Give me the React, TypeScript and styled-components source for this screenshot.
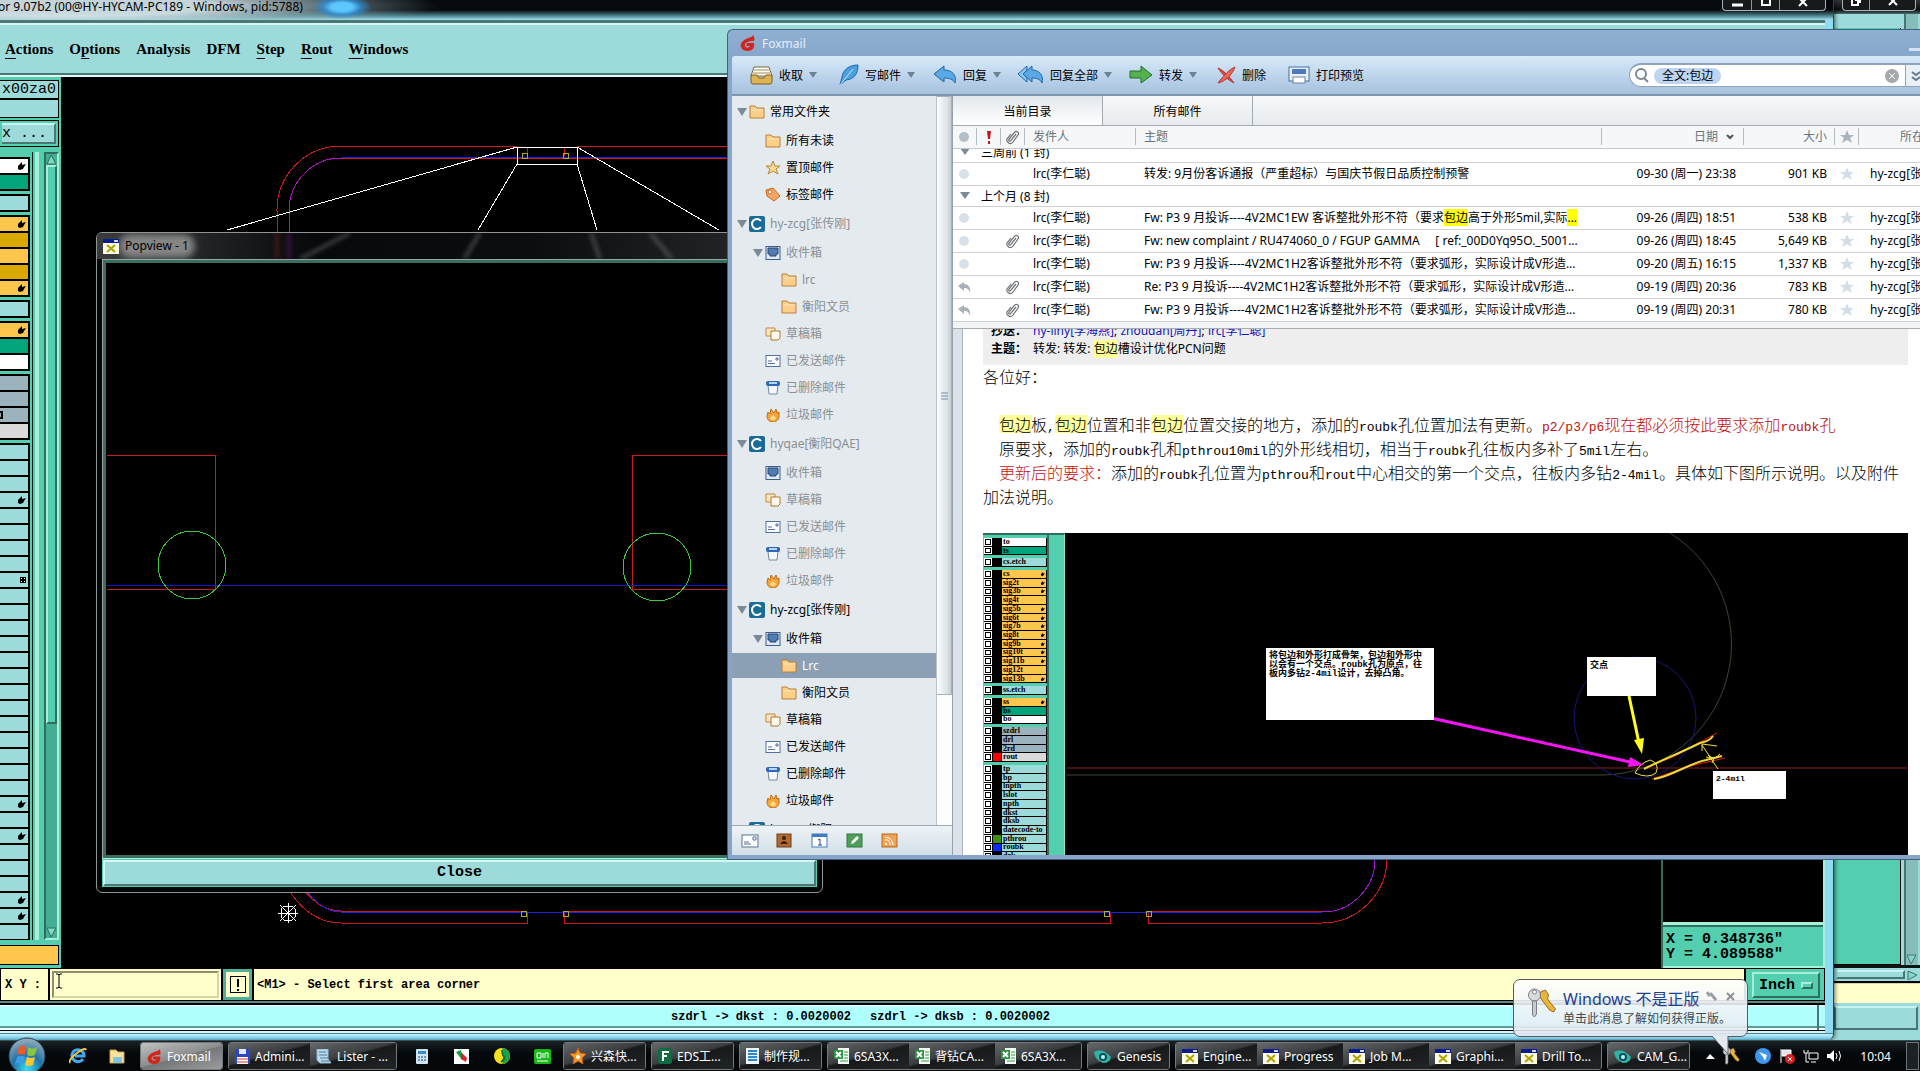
import React from 'react';
import styled, { createGlobalStyle, css } from 'styled-components';

const ui = `"Noto Sans", "Noto Sans CJK SC", sans-serif`;
const mono = `"Liberation Mono", "Noto Sans CJK SC", monospace`;

const Global = createGlobalStyle`
  *, *::before, *::after { box-sizing: border-box; }
  html, body { margin: 0; height: 100%; overflow: hidden; background: #000; }
  body { font-family: ${ui}; font-size: 12px; color: #000; }
  button, input { font: inherit; color: inherit; margin: 0; padding: 0; border: 0; background: none; outline: 0; }
  button { white-space: nowrap; }
  svg { display: block; flex: none; }
`;

const Desktop = styled.div`
  position: relative;
  height: 100vh;
  overflow: hidden;
  background: #000;
`;

/* ---------- window behind, right edge ---------- */
const BackWindow = styled.div`
  position: absolute;
  top: 0; right: 0; bottom: 30px;
  width: 96px;
  padding-left: 10px;
  display: flex;
  flex-direction: column;
  background: #9cdbda;
`;
const BackTitle = styled.div`
  height: 14px;
  display: flex;
  justify-content: flex-end;
  padding-right: 4px;
  background: linear-gradient(#33363a, #0b0d0f 70%, #4b6a6c);
`;
const BackBody = styled.div`
  flex: 1;
  display: flex;
  gap: 3px;
  padding-right: 2px;
  border-bottom: 3px solid #0b1514;
`;
const BackPanel = styled.div`
  flex: 1;
  margin-top: 14px;
  background: #53cfb0;
  border-right: 1px solid #000;
  border-bottom: 1px solid #000;
`;
const BackScroll = styled.div`
  width: 14px;
  display: flex;
  flex-direction: column;
  justify-content: flex-end;
  background: #86bcbb;
  border-left: 2px solid #477574;
`;
const BackHScroll = styled.div`
  height: 15px;
  display: flex;
  justify-content: flex-end;
  gap: 2px;
  padding: 2px;
  border-bottom: 2px solid #000;
  &::before { content: ''; flex: 1; border: 2px solid; border-color: #c9f4f3 #477574 #477574 #9cdbda; }
`;
const BackCream = styled.div`
  height: 20px;
  background: #ffffcb;
  border-top: 1px solid #d9d9a8;
`;
const BackStatus = styled.div`
  height: 24px;
  margin: 3px 2px 11px 0;
  border: 2px solid #477574;
  border-top-color: #c9f4f3;
`;

/* ---------- CAM window ---------- */
const CamWindow = styled.div`
  position: absolute;
  left: 0; top: 0; right: 86px; bottom: 30px;
  display: flex;
  flex-direction: column;
  background: #8fdcf2;
  border-right: 1px solid #23484f;
  border-radius: 0 0 8px 0;
  box-shadow: 1px 0 4px rgba(0, 0, 0, .6);
  overflow: hidden;
`;
const CamTitle = styled.div`
  height: 20px;
  display: flex;
  justify-content: space-between;
  font-size: 12px;
  line-height: 13px;
  white-space: nowrap;
  padding-right: 7px;
  background:
    radial-gradient(30px 12px at 342px 7px, #5cc6ff 35%, rgba(40, 140, 220, .7) 65%, transparent),
    radial-gradient(380px 26px at 60px 6px, rgba(214, 230, 234, .92) 40%, rgba(150, 180, 186, .6) 70%, transparent),
    linear-gradient(#06090d 50%, #4e8792 80%, #a4e6f2);
`;
const TitleText = styled.span`margin-left: -2px;`;
const Caption = styled.div`
  display: flex;
  height: 11px;
  border: 1px solid #a9b6b9;
  border-top: 0;
  border-radius: 0 0 4px 4px;
  background: #17191c;
`;
const CapBtn = styled.button<{ $w: number }>`
  width: ${p => p.$w}px;
  display: flex;
  justify-content: center;
  & + & { border-left: 1px solid #8b9699; }
`;
const CamInner = styled.div`
  flex: 1;
  min-height: 0;
  margin-right: 8px;
  display: flex;
  flex-direction: column;
  background: #000;
`;
const MenuBar = styled.nav`
  height: 57px;
  display: flex;
  align-items: center;
  gap: 16px;
  padding-left: 5px;
  background: #9cdbda;
  border-top: 3px solid #4b7875;
  border-bottom: 2px solid #dff7f6;
  box-shadow: inset 0 2px #d5f7f6, inset 0 -2px #4b7875;
`;
const MenuBtn = styled.button`
  font: bold 15px/20px "Liberation Serif", serif;
  & u { text-underline-offset: 4px; }
`;
const CamBody = styled.div`
  flex: 1;
  min-height: 0;
  display: flex;
`;
const LeftPanel = styled.aside`
  width: 61px;
  display: flex;
  flex-direction: column;
  padding: 3px 2px 1px 0;
  background: #53cfb0;
`;
const Field = styled.div<{ $raised?: boolean }>`
  height: ${p => (p.$raised ? 27 : 19)}px;
  margin-top: ${p => (p.$raised ? 2 : 0)}px;
  padding-right: 2px;
  border: 1px solid #000;
  border-left: 0;
  background: #9cdbda;
  font: 15px/17px ${mono};
  text-align: right;
  overflow: hidden;
  ${p => p.$raised && css`background: #53cfb0; padding: 2px;`}
`;
const RaisedBtn = styled.button`
  display: block;
  width: 100%;
  height: 100%;
  padding-right: 14px;
  text-align: right;
  background: #9cdbda;
  border: 2px solid;
  border-left: 0;
  border-color: #c9f4f3 #4b7875 #4b7875;
`;
const ListRow = styled.div`
  flex: 1;
  min-height: 0;
  display: flex;
  margin-top: 5px;
`;
const Layers = styled.div`
  width: 30px;
  padding-top: 5px;
  display: flex;
  flex-direction: column;
  gap: 3px;
  overflow: hidden;
`;
const LayerGroup = styled.div`
  flex: none;
  display: flex;
  flex-direction: column;
  gap: 2px;
  padding: 2px 2px 2px 0;
  background: #000;
`;
const Layer = styled.div<{ $c: string }>`
  height: 14px;
  display: flex;
  justify-content: flex-end;
  align-items: center;
  padding-right: 2px;
  background: ${p => p.$c};
`;
const Grooves = styled.div`
  width: 14px;
  background: linear-gradient(90deg, #53cfb0 2px, #0b1d18 2px 3px, #53cfb0 3px 5px, #a8efd9 5px 9px, #53cfb0 9px);
`;
const Scroll = styled.div`
  width: 15px;
  display: flex;
  flex-direction: column;
  background: #44ad94;
  border: 2px solid;
  border-color: #2f6e5c #a8efd9 #a8efd9 #2f6e5c;
`;
const Thumb = styled.div`
  flex: none;
  height: 559px;
  margin-bottom: auto;
  background: #53cfb0;
  border: 2px solid;
  border-color: #a8efd9 #2f6e5c #2f6e5c #a8efd9;
`;
const Active = styled.div`
  height: 20px;
  margin: 5px 0 2px;
  border: 1px solid #000;
  border-left: 0;
  background: #ffc64d;
`;
const Canvas = styled.div`
  position: relative;
  flex: 1;
  min-width: 0;
  overflow: hidden;
`;
const RightCol = styled.div`
  width: 164px;
  display: flex;
  flex-direction: column;
  border-left: 2px solid #2f6e5c;
  border-right: 2px solid #a8efd9;
`;
const Coords = styled.div`
  margin-top: auto;
  height: 46px;
  padding: 7px 3px 0;
  background: #53cfb0;
  border-top: 3px solid #a8efd9;
  border-bottom: 2px solid #a8efd9;
  box-shadow: inset 0 2px #2f6e5c;
  font: bold 15px/15px ${mono};
  white-space: pre;
`;
const PromptRow = styled.div`
  height: 33px;
  display: flex;
  gap: 2px;
  padding: 1px;
  font: bold 12px/15px ${mono};
`;
const XYLabel = styled.label`
  width: 47px;
  padding: 9px 4px 0;
  background: #ffffcb;
  white-space: pre;
`;
const XYBox = styled.div`
  position: relative;
  display: flex;
  width: 171px;
  padding: 2px;
  background: #ffffcb;
`;
const XYInput = styled.input`
  flex: 1;
  min-width: 0;
  && { border: 2px solid; border-color: #8f8f70 #d5d5a8 #d5d5a8 #8f8f70; }
`;
const CaretMark = styled.svg`
  position: absolute;
  left: 5px; top: 4px;
`;
const Bang = styled.button`
  width: 29px;
  display: grid;
  place-items: center;
  && { border: 3px solid #53ae98; background: #ffffcb; }
`;
const Message = styled.div`
  flex: 1;
  padding: 9px 3px 0;
  background: #ffffcb;
`;
const Units = styled.button`
  width: 78px;
  padding: 3px 4px 2px 6px;
  background: #53cfb0;
  & > span {
    display: flex;
    height: 26px;
    align-items: center;
    justify-content: space-between;
    padding: 0 5px;
    border: 2px solid;
    border-color: #a8efd9 #2f6e5c #2f6e5c #a8efd9;
    font-size: 15px;
  }
`;
const Knob = styled.i`
  width: 12px;
  height: 7px;
  border: 2px solid;
  border-color: #a8efd9 #2f6e5c #2f6e5c #a8efd9;
`;
const CamStatus = styled.div`
  height: 32px;
  padding: 4px 6px 3px 0;
  background: linear-gradient(#5f8a88 2px, #000 2px 4px, #d6ffff 4px 6px, #b0ffff 6px 25px, #5f9a98 25px 27px, #e5ffff 27px 29px, #000 29px 30px, #d3f3fb 30px);
  & > div {
    display: flex;
    gap: 19px;
    height: 25px;
    align-items: center;
    padding-left: 671px;
    border-right: 2px solid #4b7875;
    font: bold 12px/15px ${mono};
  }
`;
const CamFrame = styled.div`
  height: 8px;
  border-top: 1px solid #4f8296;
  background: linear-gradient(#c7f3fd, #7ccbe8 60%, #3f7f93);
`;

/* ---------- Popview ---------- */
const Popview = styled.section`
  position: absolute;
  left: 96px; top: 232px;
  width: 727px;
  height: 661px;
  display: flex;
  flex-direction: column;
  padding: 0 5px 5px;
  border: 1px solid #8f9496;
  border-radius: 6px;
  background: #030506;
`;
const PopTitle = styled.div`
  position: relative;
  height: 26px;
  margin: 0 -5px;
  padding: 0 6px;
  display: flex;
  align-items: center;
  gap: 6px;
  overflow: hidden;
  border-radius: 6px 6px 0 0;
  background: linear-gradient(90deg, #3a3c3e, #07090b 30%, #0b0d0f 60%, #2b2d2f);
`;
const PopName = styled.span`
  position: relative;
  line-height: 12px;
  border-radius: 6px;
  background: #858585;
  box-shadow: 0 0 7px 6px #858585;
  & + svg { z-index: 1; }
`;
const PopIcon = styled.span`
  position: relative;
  z-index: 1;
`;
const Blur = styled.svg`
  position: absolute;
  left: 0; top: 0;
  filter: blur(2px);
  opacity: .35;
`;
const PopView = styled.div`
  flex: 1;
  min-height: 0;
  overflow: hidden;
  border: 1px solid #9aa5a5;
  border-bottom: 3px solid #b5e9d9;
  outline: 3px solid #3a6f60;
  outline-offset: -4px;
  background: #000;
`;
const CloseBtn = styled.button`
  height: 26px;
  margin: 1px;
  font: bold 15px/20px ${mono};
  && {
    margin: 1px;
    background: #9cdbda;
    border: 2px solid;
    border-color: #d5f7f6 #4b7875 #4b7875 #d5f7f6;
    outline: 1px solid #53cfb0;
  }
`;

/* ---------- Foxmail ---------- */
const Fox = styled.section`
  position: absolute;
  left: 727px; top: 29px; right: 0; bottom: 211px;
  display: flex;
  flex-direction: column;
  padding: 0 0 4px 4px;
  border: 1px solid #41617f;
  border-right: 0;
  border-radius: 6px 0 0 0;
  background: linear-gradient(#90b0d2, #86a6cb 27px, #86a5c8);
`;
const FoxTitle = styled.header`
  height: 26px;
  display: flex;
  align-items: center;
  gap: 6px;
  padding-left: 8px;
  color: #e6eef8;
  & > button { margin: 12px 0 0 auto; width: 11px; height: 3px; background: #d4e2f2; }
`;
const Toolbar = styled.div`
  height: 40px;
  display: flex;
  align-items: center;
  padding-left: 18px;
  border-bottom: 2px solid #7f97ae;
  border-radius: 3px 0 0 0;
  background: linear-gradient(#d8eaf9, #b9d1ea 60%, #a8c1dc);
`;
const Tool = styled.button<{ $w: number; $caret?: boolean }>`
  width: ${p => p.$w}px;
  height: 30px;
  display: flex;
  align-items: center;
  gap: 6px;
  ${p => p.$caret && css`&::after { content: ''; border: 4px solid transparent; border-top: 6px solid #6c8296; border-bottom: 0; }`}
`;
const Search = styled.div`
  margin-left: auto;
  width: 291px;
  height: 24px;
  display: flex;
  align-items: center;
  gap: 5px;
  padding-left: 5px;
  border: 2px solid #8fa5bb;
  border-width: 2px 0 1px 1px;
  border-radius: 12px 0 0 12px;
  background: #fff;
  & input { flex: 1; min-width: 0; }
`;
const Chip = styled.label`
  height: 16px;
  padding: 0 8px;
  border-radius: 8px;
  background: #bed5ef;
  line-height: 16px;
`;
const MoreBtn = styled.button`
  width: 15px;
  height: 21px;
  padding-left: 4px;
  overflow: hidden;
  && { border-left: 1px solid #8fa5bb; background: #e8f0f8; }
`;
const FoxBody = styled.div`
  flex: 1;
  min-height: 0;
  display: flex;
`;
const Side = styled.aside`
  width: 220px;
  display: flex;
  flex-direction: column;
  background: #e4eaee;
`;
const SideTop = styled.div`
  flex: 1;
  min-height: 0;
  display: flex;
`;
const Tree = styled.ul`
  flex: 1;
  margin: 0;
  padding: 0;
  overflow: hidden;
  list-style: none;
`;
const Node = styled.li<{ $level: number; $dim?: boolean; $sel?: boolean }>`
  height: ${p => (p.$level ? 27 : 31)}px;
  display: flex;
  align-items: center;
  gap: 5px;
  padding-left: ${p => 4 + p.$level * 16}px;
  line-height: 18px;
  white-space: nowrap;
  color: ${p => (p.$sel ? '#fff' : p.$dim ? '#8b8f93' : '#000')};
  ${p => p.$sel && css`background: linear-gradient(#8ba0b5, #8ba0b5) 0 1px / 100% 25px no-repeat;`}
`;
const Twist = styled.i<{ $on?: boolean }>`
  width: 11px;
  display: flex;
  justify-content: center;
  visibility: ${p => (p.$on ? 'visible' : 'hidden')};
  margin-right: -3px;
  &::after { content: ''; border: 5px solid transparent; border-top: 8px solid #7b8a96; border-bottom: 0; }
`;
const SideScroll = styled.div`
  width: 16px;
  background: #fdfdfd;
  border-left: 1px solid #b9c2c9;
`;
const SideThumb = styled.div`
  height: 599px;
  display: grid;
  place-items: center;
  border: 1px solid #a9b1b8;
  border-left: 0;
  background: linear-gradient(90deg, #fcfdfe, #dfe4e9 70%, #c7cdd3);
`;
const SideBar = styled.div`
  height: 30px;
  display: flex;
  align-items: center;
  gap: 17px;
  padding-left: 9px;
  border-top: 1px solid #9dabb8;
  background: linear-gradient(#eef3f6, #d3dfe8);
`;
const Main = styled.div`
  flex: 1;
  min-width: 0;
  display: flex;
  flex-direction: column;
  border-left: 1px solid #97a1aa;
  background: #fff;
`;
const Tabs = styled.div`
  height: 30px;
  display: flex;
  background: linear-gradient(#f7f9fa, #e6eaed);
  border-bottom: 1px solid #a3aab1;
`;
const Tab = styled.button<{ $on?: boolean }>`
  width: 150px;
  && {
    border-right: 1px solid #a3aab1;
    background: ${p => (p.$on ? 'linear-gradient(#e3e8ec, #ffffff)' : 'none')};
  }
`;
const Mails = styled.table`
  width: 100%;
  table-layout: fixed;
  border-collapse: separate;
  border-spacing: 0;
  line-height: 18px;
  white-space: nowrap;
  & td, & th { padding: 0; overflow: hidden; text-align: left; font-weight: normal; }
  & th {
    height: 23px;
    color: #6b747c;
    border-bottom: 1px solid #c4c9cd;
    background: linear-gradient(#b4bcc3, #b4bcc3) right 2px / 1px 17px no-repeat, #f5f7f9;
  }
  & th:last-child { background: #f5f7f9; }
  & td { height: 23px; border-bottom: 1px solid #cfd2d4; }
  & td svg, & th svg { margin: 0 auto; }
  & td:nth-child(1), & th:nth-child(1) { padding-right: 2px; }
  & td:nth-child(n+4), & th:nth-child(n+4) { padding-left: 8px; }
  & td:nth-child(6), & td:nth-child(7), & th:nth-child(6), & th:nth-child(7) { text-align: right; padding-right: 8px; }
  & td:nth-child(8), & th:nth-child(8) { padding: 0; }
  & td:nth-child(9) { padding-left: 11px; }
  & th:nth-child(9) { padding-left: 41px; }
`;
const GroupCell = styled.td<{ $cut?: boolean }>`
  && { height: ${p => (p.$cut ? 14 : 21)}px; }
  & > div {
    height: ${p => (p.$cut ? 13 : 20)}px;
    display: flex;
    align-items: flex-end;
    overflow: hidden;
    line-height: 19px;
  }
  & > div::before {
    content: '';
    align-self: flex-end;
    margin: 0 11px 7px 7px;
    border: 5px solid transparent;
    border-top: 7px solid #7b8a96;
    border-bottom: 0;
  }
`;
const SortHead = styled.span`
  display: flex;
  align-items: center;
  justify-content: flex-end;
  gap: 8px;
  && svg { margin: 0 2px 0 0; }
`;
const Hot = styled.mark<{ $strong?: boolean }>`
  display: inline-block;
  line-height: ${p => (p.$strong ? 17 : 18)}px;
  background: ${p => (p.$strong ? '#ffff00' : '#ffff99')};
  color: inherit;
`;
const Split = styled.div`
  height: 7px;
  border-bottom: 1px solid #a9adb1;
  background: #f1f3f4;
`;
const Preview = styled.article`
  flex: 1;
  min-height: 0;
  margin-left: 9px;
  padding: 0 12px 0 20px;
  overflow: hidden;
  border-left: 1px solid #a9b4be;
  background: #fff;
  box-shadow: -9px 0 #dae1e8;
`;
const MailHead = styled.dl`
  margin: 0;
  height: 36px;
  padding-left: 8px;
  display: flex;
  flex-direction: column;
  overflow: hidden;
  background: #eeeeee;
  line-height: 18px;
  & > div { display: flex; gap: 6px; flex: none; }
  & > div:first-child { margin-top: -7px; }
  & dt { font-weight: bold; width: 36px; white-space: nowrap; overflow: hidden; }
  & dd { margin: 0; }
  & a { color: #1414c0; text-decoration: none; }
`;
const Para = styled.p<{ $in?: boolean; $gap?: boolean }>`
  height: 24px;
  margin: 0 0 ${p => (p.$gap ? 24 : 0)}px;
  padding-left: ${p => (p.$in ? 16 : 0)}px;
  font: 16px/22px "Noto Sans CJK SC", sans-serif;
  font-weight: 300;
  white-space: nowrap;
`;
const Lat = styled.span`font: 13px/13px "Liberation Mono", monospace;`;
const Red = styled.span`color: #c3120f;`;

const Shot = styled.figure`
  margin: 0;
  height: 323px;
  display: flex;
  overflow: hidden;
  background: #000;
`;
const ShotPanel = styled.div`
  width: 82px;
  height: 328px;
  flex: none;
  display: flex;
  justify-content: space-between;
  padding-top: 3px;
  border-right: 1px solid #8fe5cf;
  background: linear-gradient(#2f6e5c, #2f6e5c) 64px 0 / 2px 100% no-repeat, #53cfb0;
  border-top: 2px solid #2f6e5c;
`;
const ShotList = styled.div`
  width: 64px;
  height: 323px;
  display: flex;
  flex-direction: column;
  gap: 3px;
  padding-left: 1px;
`;
const ShotGroup = styled.div<{ $n: number }>`
  flex: ${p => p.$n} 1 0;
  min-height: 0;
  display: flex;
  flex-direction: column;
  background: #000;
`;
const ShotLayer = styled.div<{ $c: string; $swatch?: string }>`
  flex: 1 1 0;
  min-height: 0;
  display: grid;
  grid-template: 100% / 8px 8px 44px;
  gap: 1px;
  padding-bottom: 1px;
  font: bold 8px/6px "Liberation Serif", serif;
  & > i { border: 1px solid #fff; background: #fff; box-shadow: inset 0 0 0 1px #000; }
  & > b { background: ${p => p.$swatch || '#000'}; }
  & > span { display: flex; justify-content: space-between; align-items: center; padding: 0 1px; background: ${p => p.$c}; }
`;

/* ---------- Taskbar ---------- */
const Taskbar = styled.footer`
  position: absolute;
  left: 0; right: 0; bottom: 0;
  height: 31px;
  display: flex;
  align-items: center;
  padding: 0 1px 0 61px;
  color: #fff;
  border-top: 1px solid #3d5055;
  background: linear-gradient(#1a2226, #05080b 40%);
`;
const Orb = styled.button`
  position: absolute;
  left: 8px; bottom: -4px;
  width: 38px;
  height: 38px;
`;
const Quick = styled.button<{ $w: number }>`
  width: ${p => p.$w}px;
  display: flex;
  justify-content: center;
`;
const TaskGroup = styled.div`
  height: 28px;
  display: flex;
  margin-right: 5px;
  border: 1px solid #74797c;
  border-radius: 3px;
  overflow: hidden;
`;
const Task = styled.button<{ $on?: boolean; $first?: boolean }>`
  width: ${p => (p.$first ? 81 : 86)}px;
  display: flex;
  align-items: center;
  gap: 5px;
  && {
    padding-left: 6px;
    color: #fff;
    background: ${p => p.$on
      ? 'linear-gradient(165deg, #bfc1c2, #8b8d8e 50%, #747677 52%, #9a9c9d)'
      : 'linear-gradient(165deg, #66696b, #3a3d3f 45%, #17191b 50%, #222527)'};
  }
`;
const Tray = styled.div`
  margin-left: auto;
  height: 30px;
  display: flex;
  align-items: center;
  gap: 7px;
`;
const TrayKeys = styled.span`margin-right: 8px;`;
const Clock = styled.time`margin: 0 8px 0 10px;`;
const ShowDesk = styled.button`
  width: 13px;
  height: 28px;
  && { border: 1px solid #6d7376; background: #1d2124; }
`;

const Balloon = styled.div`
  position: absolute;
  right: 172px; bottom: 34px;
  width: 235px;
  height: 58px;
  display: flex;
  gap: 6px;
  padding: 8px 12px 0 12px;
  border: 1px solid #565a5e;
  border-radius: 7px;
  background: linear-gradient(rgba(255, 255, 255, .9), rgba(226, 232, 240, .88));
`;
const BalloonText = styled.div`
  flex: 1;
  white-space: nowrap;
  color: #3b4a50;
  line-height: 18px;
  & h2 { margin: 0; font: 16px/22px ${ui}; color: #1d3f94; }
`;
const BalloonBtns = styled.div`
  position: absolute;
  right: 12px; top: 11px;
  display: flex;
  gap: 9px;
`;
const Tail = styled.svg`
  position: absolute;
  right: 14px; top: 56px;
`;

/* ---------- drawings ---------- */
const Hand = ({ s = 8 }: { s?: number }) => (
  <svg width={s} height={s} viewBox="0 0 8 8"><path d="M0 4L2 2L4 0V3L8 2L6 5L5 7L2 8L0 7Z" /></svg>
);
const Tri = ({ d, dark = '#2f6e5c' }: { d: 'up' | 'down' | 'right'; dark?: string }) => (
  <svg width="11" height="11" viewBox="0 0 11 11">
    <path d={d === 'up' ? 'M5 1L10 10H1Z' : d === 'down' ? 'M1 1H10L5 10Z' : 'M1 1L10 5L1 10Z'} fill="#7fd9c4" stroke={dark} />
  </svg>
);
const G = ({ s = 16 }: { s?: number }) => (
  <svg width={s} height={s} viewBox="0 0 16 16">
    <path d="M13 0C12 3 9 2 6 4C2 6 0 9 1 12C2 15 5 16 8 16C12 16 15 13 14 8H7L6 11H10C9 13 6 13 5 11C4 8 8 6 14 6C15 4 14 1 13 0Z" fill="#d2261c" />
  </svg>
);
const Caret = () => <svg width="8" height="6" viewBox="0 0 8 6"><path d="M1 1L4 4L7 1" fill="none" stroke="#4b545c" strokeWidth="2" /></svg>;
const Star = ({ c = '#d3dde6' }: { c?: string }) => (
  <svg width="14" height="14" viewBox="0 0 14 14"><path d="M7 0L9 5L14 5L10 8L12 13L7 10L2 13L4 8L0 5L5 5Z" fill={c} /></svg>
);
const Dot = ({ c = '#d9e1e8' }: { c?: string }) => <svg width="10" height="10"><circle cx="5" cy="5" r="5" fill={c} /></svg>;
const Clip = () => (
  <svg width="14" height="15" viewBox="0 0 14 15"><path d="M10 4L5 10C4 12 2 11 3 9L8 3C10 0 14 2 12 5L7 12C5 15 0 13 1 9L5 4" fill="none" stroke="#6b7075" strokeWidth="1.2" /></svg>
);
const Replied = () => <svg width="13" height="11" viewBox="0 0 13 11"><path d="M0 4L6 0V2C10 2 13 5 12 11C11 7 9 6 6 6V9Z" fill="#a9b1b8" /></svg>;

const treeIcons: Record<string, React.ReactNode> = {
  folder: <svg width="16" height="14" viewBox="0 0 16 14"><path d="M1 1H6L8 3H15V13H1Z" fill="#fbcf8a" stroke="#b98036" /><path d="M2 5H14" stroke="#ffe6bb" /></svg>,
  star: <svg width="16" height="15" viewBox="0 0 16 15"><path d="M8 1L10 6L15 6L11 9L13 14L8 11L3 14L5 9L1 6L6 6Z" fill="#fbdc92" stroke="#b5873a" /></svg>,
  tag: <svg width="16" height="15" viewBox="0 0 16 15"><path d="M1 3L8 1L15 9L9 14L2 9Z" fill="#f7a562" stroke="#c56b23" /><circle cx="5" cy="5" r="2" fill="#fff" stroke="#c56b23" /></svg>,
  acct: <svg width="16" height="16" viewBox="0 0 16 16"><rect width="16" height="16" rx="2" fill="#1a6c98" /><path d="M12 5A5 5 0 1 0 12 11" fill="none" stroke="#fff" strokeWidth="2" /></svg>,
  inbox: <svg width="16" height="14" viewBox="0 0 16 14"><rect x="1" y=".5" width="14" height="13" fill="#dfe8f3" stroke="#3c5f8d" /><path d="M3 2H13V8H11V10H5V8H3Z" fill="#4f7db6" stroke="#27476f" /></svg>,
  draft: <svg width="16" height="14" viewBox="0 0 16 14"><path d="M1 1H10V9H1Z" fill="#f8e4c3" stroke="#c38a3e" /><path d="M6 4H15V11L13 13H6Z" fill="#fff8ec" stroke="#b0762c" /></svg>,
  sent: <svg width="16" height="12" viewBox="0 0 16 12"><rect x="1" y=".5" width="14" height="11" fill="#fafcff" stroke="#54709c" /><path d="M3 6H7M3 8.500H10M11 3H13V5H11Z" stroke="#54709c" fill="none" /></svg>,
  trash: <svg width="16" height="15" viewBox="0 0 16 15"><path d="M3 5L4 14H12L13 5" fill="#f5f8fc" stroke="#7489a6" /><rect x="1" y="1" width="14" height="5" rx="2" fill="#2e66b8" /><path d="M4 3H12" stroke="#b7d6fa" strokeWidth="2" /></svg>,
  junk: <svg width="16" height="14" viewBox="0 0 16 14"><path d="M2 8L3 4L5 6L6 1L9 5L11 1L12 5L14 4V9C13 13 10 14 8 14C5 14 2 12 2 8Z" fill="#f5a63b" stroke="#bd6a15" /><path d="M5 10L8 7L11 10C10 13 6 13 5 10" fill="#ffd98c" /></svg>,
};

const treeData: [number, string, string, number][] = [
  // level, icon, label, flags: 1 = expanded, 2 = dimmed, 4 = selected
  [0, 'folder', '常用文件夹', 1],
  [1, 'folder', '所有未读', 0], [1, 'star', '置顶邮件', 0], [1, 'tag', '标签邮件', 0],
  [0, 'acct', 'hy-zcg[张传刚]', 3],
  [1, 'inbox', '收件箱', 3], [2, 'folder', 'lrc', 2], [2, 'folder', '衡阳文员', 2],
  [1, 'draft', '草稿箱', 2], [1, 'sent', '已发送邮件', 2], [1, 'trash', '已删除邮件', 2], [1, 'junk', '垃圾邮件', 2],
  [0, 'acct', 'hyqae[衡阳QAE]', 3],
  [1, 'inbox', '收件箱', 2], [1, 'draft', '草稿箱', 2], [1, 'sent', '已发送邮件', 2], [1, 'trash', '已删除邮件', 2], [1, 'junk', '垃圾邮件', 2],
  [0, 'acct', 'hy-zcg[张传刚]', 1],
  [1, 'inbox', '收件箱', 1], [2, 'folder', 'Lrc', 4], [2, 'folder', '衡阳文员', 0],
  [1, 'draft', '草稿箱', 0], [1, 'sent', '已发送邮件', 0], [1, 'trash', '已删除邮件', 0], [1, 'junk', '垃圾邮件', 0],
  [0, 'acct', 'hyqae[衡阳]', 1],
];

const toolIcons: Record<string, React.ReactNode> = {
  get: <svg width="23" height="20" viewBox="0 0 23 20"><path d="M4 2H19L22 11H1Z" fill="#fff" stroke="#7c6a3c" /><path d="M4 5H19M3 8H20" stroke="#a08a55" /><path d="M1 10H7L9 13H14L16 10H22V17Q22 19 20 19H3Q1 19 1 17Z" fill="#dcb252" stroke="#806022" /></svg>,
  write: <svg width="21" height="22" viewBox="0 0 21 22"><path d="M2 21L4 13C5 5 12 1 20 1C20 9 17 15 8 16Z" fill="#4ba0e0" stroke="#1f6aa8" /><path d="M2 21L15 5" stroke="#c4e4fb" /></svg>,
  reply: <svg width="24" height="20" viewBox="0 0 24 20"><path d="M1 9L11 1V5C19 5 24 10 22 18C20 14 16 13 11 13V17Z" fill="#5aa9e6" stroke="#22669f" /></svg>,
  all: <svg width="27" height="20" viewBox="0 0 27 20"><path d="M1 9L10 1V5L6 9L10 13V17Z" fill="#8cc6f2" stroke="#22669f" /><path d="M6 9L15 1V5C22 5 27 10 25 18C23 14 20 13 15 13V17Z" fill="#5aa9e6" stroke="#22669f" /></svg>,
  fwd: <svg width="24" height="20" viewBox="0 0 24 20"><path d="M1 6H12V1L23 10L12 18V13H1Z" fill="#55b04f" stroke="#24702a" /></svg>,
  del: <svg width="19" height="18" viewBox="0 0 19 18"><path d="M1 2C6 4 12 10 17 17C11 14 5 8 1 2Z" fill="#dc4a3f" stroke="#b8362e" /><path d="M18 1C13 3 7 9 1 17C9 15 15 9 18 1Z" fill="#e8665a" stroke="#b8362e" /></svg>,
  print: <svg width="22" height="18" viewBox="0 0 22 18"><rect x="1" y="1" width="20" height="14" fill="#e9f0f9" stroke="#456fb0" /><rect x="4" y="3" width="14" height="5" fill="#4c79c0" /><rect x="5" y="11" width="12" height="6" fill="#fff" stroke="#6a7f9c" /></svg>,
};
const tools: [string, string, number, boolean][] = [
  ['get', '收取', 88, true], ['write', '写邮件', 95, true], ['reply', '回复', 84, true],
  ['all', '回复全部', 112, true], ['fwd', '转发', 88, true], ['del', '删除', 71, false], ['print', '打印预览', 90, false],
];

type Mail = [boolean, boolean, React.ReactNode, string, string];
const cut = 'Fw: P3 9 月投诉----4V2MC1H2客诉整批外形不符（要求弧形，实际设计成V形造...';
const firstMail: Mail = [false, false, '转发: 9月份客诉通报（严重超标）与国庆节假日品质控制预警', '09-30 (周一) 23:38', '901 KB'];
const mails: Mail[] = [
  [false, false, <>Fw: P3 9 月投诉----4V2MC1EW 客诉整批外形不符（要求<Hot $strong>包边</Hot>高于外形5mil,实际<Hot $strong>...</Hot></>, '09-26 (周四) 18:51', '538 KB'],
  [false, true, <>Fw: new complaint / RU474060_0 / FGUP GAMMA&nbsp;&nbsp;&nbsp;&nbsp; [ ref:_00D0Yq95O._5001...</>, '09-26 (周四) 18:45', '5,649 KB'],
  [false, false, cut, '09-20 (周五) 16:15', '1,337 KB'],
  [true, true, cut.replace('Fw', 'Re'), '09-19 (周四) 20:36', '783 KB'],
  [true, true, cut, '09-19 (周四) 20:31', '780 KB'],
];
const MailRow = ({ m }: { m: Mail }) => (
  <tr>
    <td>{m[0] ? <Replied /> : <Dot />}</td>
    <td />
    <td>{m[1] && <Clip />}</td>
    <td>lrc(李仁聪)</td>
    <td>{m[2]}</td>
    <td>{m[3]}</td>
    <td>{m[4]}</td>
    <td><Star /></td>
    <td>hy-zcg[张传刚]</td>
  </tr>
);

const T = '#9cdbda', O = '#ffc64d', D = '#d9a900', E = '#00a57c', W = '#ffffff', S = '#9bb3bd', L = '#dadada';
const layerGroups: string[][] = [
  [W + '*', E], [T], [O + '*', D, O, D, O + '*'], [T], [O + '*', E, W], [S, S, S + 'o', L],
  Array.from({ length: 31 }, (_, i) => ([3, 22, 24, 28, 29].includes(i) ? T + '*' : i === 8 ? T + '#' : T)),
];
const shotGroups: [string, string][][] = [
  [['to', W], ['ts', E]],
  [['cs.etch', T]],
  ['cs*', 'sig2t*', 'sig3b*', 'sig4t', 'sig5b*', 'sig6t*', 'sig7b*', 'sig8t*', 'sig9b*', 'sig10t*', 'sig11b*', 'sig12t', 'sig13b*'].map(n => [n, O] as [string, string]),
  [['ss.etch', T]],
  [['ss*', O], ['bs', E], ['bo', W]],
  [['szdrl', S], ['drl', S], ['2rd', S], ['rout', L]],
  ['tp', 'bp', 'lnpth', 'lslot', 'npth', 'dkst', 'dksb', 'datecode-to', 'pthrou', 'roubk', 'drk'].map(n => [n, T] as [string, string]),
];
const swatches: Record<string, string> = { rout: '#ff0000', pthrou: '#3f8f10', roubk: '#0a2cff' };

const XIcon = () => (
  <svg width="16" height="15" viewBox="0 0 16 15"><rect width="16" height="15" fill="#fbfbe8" /><rect width="16" height="4" fill="#0b1a8c" /><rect x="11" y="1" width="4" height="2" fill="#d6d6d6" /><path d="M4 6L12 13M12 6L4 13" stroke="#b0a400" strokeWidth="2" /></svg>
);
const Xls = () => (
  <svg width="15" height="16" viewBox="0 0 15 16"><rect x="4" width="11" height="16" fill="#f4faf4" /><path d="M10 4H14M10 7H14M10 10H14M6 13H14" stroke="#3a9a48" /><rect y="2" width="9" height="9" fill="#2b9440" /><path d="M2 4L7 9M7 4L2 9" stroke="#fff" strokeWidth="2" /></svg>
);
const Eye = () => (
  <svg width="18" height="14" viewBox="0 0 18 14"><path d="M0 3Q8 -2 17 8Q16 14 9 14Q1 11 0 3Z" fill="#2cb5a4" /><circle cx="9" cy="8" r="4" fill="#0c4f60" /><circle cx="9" cy="8" r="2" fill="#bff5e8" /></svg>
);
const icons: Record<string, React.ReactNode> = {
  fox: <G s={15} />,
  disk: <svg width="15" height="15" viewBox="0 0 15 15"><rect width="15" height="15" rx="1" fill="#2d46c4" /><rect x="4" width="7" height="5" fill="#e5e9f7" /><rect x="2" y="8" width="11" height="7" fill="#fff" /><path d="M2 10H13M2 13H13" stroke="#d33" /></svg>,
  note: <svg width="16" height="15" viewBox="0 0 16 15"><path d="M1 0H12V10L15 14H4L1 11Z" fill="#b9d9ec" stroke="#8fb6d0" /><path d="M3 3H10M3 6H11M4 9H12M5 12H13" stroke="#4e7fa0" /></svg>,
  star: <svg width="16" height="16" viewBox="0 0 16 16"><path d="M8 0L10 5L16 6L12 10L13 16L8 13L3 16L4 10L0 6L6 5Z" fill="#f49a2c" stroke="#c85e12" /><circle cx="8" cy="9" r="2" fill="#fff" /></svg>,
  eds: <svg width="14" height="16" viewBox="0 0 14 16"><rect width="14" height="16" rx="3" fill="#0f6b42" /><path d="M5 13V4H11M5 8H9" fill="none" stroke="#fff" strokeWidth="2" /></svg>,
  doc: <svg width="13" height="16" viewBox="0 0 13 16"><rect width="13" height="16" fill="#eef7ff" /><path d="M2 3H11M2 6H11M2 9H11M2 12H11" stroke="#2f86c9" strokeWidth="2" /></svg>,
  xls: <Xls />, eye: <Eye />, x: <XIcon />,
};
const taskGroups: [string, string][][] = [
  [['star', '兴森快...']], [['eds', 'EDS工...']], [['doc', '制作规...']],
  [['xls', '6SA3X...'], ['xls', '背钻CA...'], ['xls', '6SA3X...']],
  [['eye', 'Genesis']],
  [['x', 'Engine...'], ['x', 'Progress'], ['x', 'Job M...'], ['x', 'Graphi...'], ['x', 'Drill To...']],
  [['eye', 'CAM_G...']],
];
const Group = ({ items }: { items: [string, string][] }) => (
  <TaskGroup>
    {items.map(([i, t], k) => <Task key={k} $first={k === 0} $on={i === 'fox'}>{icons[i]}{t}</Task>)}
  </TaskGroup>
);
const Keys = ({ w, h }: { w: number; h: number }) => (
  <svg width={w} height={h} viewBox="0 0 30 30">
    <path d="M14 4L19 2L22 7L21 11L29 21L27 24L23 22L14 10Z" fill="#e8b43c" stroke="#9c6c14" />
    <circle cx="8" cy="7" r="6" fill="#d7dade" stroke="#7b8085" /><circle cx="8" cy="4" r="2" fill="#fff" stroke="#7b8085" />
    <path d="M6 13H10V26L8 29L6 27Z" fill="#c6cacf" stroke="#7b8085" />
  </svg>
);

const Geometry = () => (
  <svg width="1400" height="890" viewBox="61 77 1400 890" fill="none" strokeWidth="1" shapeRendering="crispEdges">
    <g stroke="#d01818">
      <path d="M277 240V211A64 64 0 0 1 341 146H517M577 146H800" />
      <path d="M527 147V156M564 147V156M341 158H800" />
      <path d="M289 240V211A52 53 0 0 1 341 158" stroke="#b012c0" />
      <path d="M276 865Q300 923 341 923H527V913M564 913V923H1110V913M1148 913V923H1322A65 65 0 0 0 1387 858" />
      <path d="M290 865Q310 911 341 911H527M564 911H1110M1148 911H1322" />
    </g>
    <g stroke="#2020e0">
      <path d="M341 157H800M300 880Q318 912 341 912H1322" />
      <path d="M1322 912A53 53 0 0 0 1375 858" stroke="#a018d8" />
    </g>
    <g stroke="#a8b02c">
      {[[525, 156], [566, 156], [524, 914], [566, 914], [1107, 914], [1149, 914]].map(([x, y]) => <circle key={x + '-' + y} cx={x} cy={y} r="3" />)}
    </g>
    <path d="M517 147H577V164H517ZM517 147L227 230M517 164L478 230M577 164L597 230M577 147L719 230" stroke="#fff" />
    <path d="M278 913H298M288 903V923M280 905L296 921M296 905L280 921M281 909V917L284 920H292L295 917V909L292 906H284Z" stroke="#fff" />
  </svg>
);

const ShotDrawing = () => (
  <svg width="843" height="323" viewBox="1065 532 843 323" fill="none">
    <path d="M1066 767H1908" stroke="#8e1c1c" />
    <path d="M1066 774H1603A131 131 0 0 0 1670 532" stroke="#3a4632" />
    <circle cx="1635" cy="717" r="61" stroke="#161678" />
    <path d="M1647 766L1673 756L1717 732M1652 778L1690 765L1725 757" stroke="#e02010" />
    <path d="M1644 768C1660 760 1680 752 1700 742Q1710 740 1713 735M1654 778C1670 776 1690 762 1706 759L1722 755" stroke="#f2d83a" strokeWidth="2" />
    <path d="M1635 772Q1640 762 1650 759Q1660 762 1656 772Q1648 778 1635 772M1702 744L1718 768M1702 750V743L1717 745M1708 754L1714 758L1720 753M1712 762L1714 757L1706 756" stroke="#f2e23a" />
    <path d="M1431 717L1630 761" stroke="#f614f6" strokeWidth="3" />
    <path d="M1644 764L1628 766L1630 756Z" fill="#f614f6" />
    <path d="M1629 695L1639 742" stroke="#ffff1a" strokeWidth="3" />
    <path d="M1642 753L1634 739L1644 737Z" fill="#ffff1a" />
    <g fill="#fff"><path d="M1266 647H1434V719H1266ZM1587 656H1656V695H1587ZM1713 770H1786V798H1713Z" /></g>
    <g fill="#000" fontFamily='"Liberation Mono","Noto Sans CJK SC",monospace' fontSize="9" fontWeight="bold">
      <text x="1269" y="657">将包边和外形打成骨架，包边和外形中</text>
      <text x="1269" y="666">以会有一个交点。roubk孔为原点，往</text>
      <text x="1269" y="675">板内多钻2-4mil设计，去掉凸角。</text>
      <text x="1590" y="667">交点</text>
      <text x="1716" y="780" fontSize="8">2-4mil</text>
    </g>
  </svg>
);

const menus: [string, string, string][] = [['', 'A', 'ctions'], ['O', 'p', 'tions'], ['Analysis', '', ''], ['DFM', '', ''], ['', 'S', 'tep'], ['', 'R', 'out'], ['', 'W', 'indows']];

export default function App() {
  return (
    <Desktop>
      <Global />
      <BackWindow>
        <BackTitle>
          <Caption>
            <CapBtn $w={26} aria-label="Restore"><svg width="10" height="8"><path d="M1 0V5H7V0M4 0H9V3" fill="none" stroke="#fff" strokeWidth="2" /></svg></CapBtn>
            <CapBtn $w={46} aria-label="Close"><svg width="10" height="6"><path d="M1 5L8 -2M9 5L2 -2" stroke="#fff" strokeWidth="2" /></svg></CapBtn>
          </Caption>
        </BackTitle>
        <BackBody>
          <BackPanel />
          <BackScroll><Tri d="down" dark="#477574" /></BackScroll>
        </BackBody>
        <BackHScroll><Tri d="right" dark="#477574" /></BackHScroll>
        <BackCream />
        <BackStatus />
      </BackWindow>

      <CamWindow>
        <CamTitle>
          <TitleText>or 9.07b2 (00@HY-HYCAM-PC189 - Windows, pid:5788)</TitleText>
          <Caption>
            <CapBtn $w={28} aria-label="Minimize"><svg width="11" height="7"><path d="M0 5H11" stroke="#fff" strokeWidth="3" /></svg></CapBtn>
            <CapBtn $w={28} aria-label="Maximize"><svg width="10" height="6"><path d="M1 0V5H9V0" fill="none" stroke="#fff" strokeWidth="2" /></svg></CapBtn>
            <CapBtn $w={46} aria-label="Close"><svg width="10" height="7"><path d="M1 6L8 -1M9 6L2 -1" stroke="#fff" strokeWidth="2" /></svg></CapBtn>
          </Caption>
        </CamTitle>
        <CamInner>
          <MenuBar>
            {menus.map(([a, u, b]) => <MenuBtn key={a + u + b}>{a}{u && <u>{u}</u>}{b}</MenuBtn>)}
          </MenuBar>
          <CamBody>
            <LeftPanel>
              <Field>x00za0</Field>
              <Field />
              <Field $raised><RaisedBtn>x ...</RaisedBtn></Field>
              <ListRow>
                <Layers>
                  {layerGroups.map((g, i) => (
                    <LayerGroup key={i}>
                      {g.map((c, k) => (
                        <Layer key={k} $c={c.slice(0, 7)}>
                          {c[7] === '*' && <Hand />}
                          {c[7] === 'o' && <svg width="26" height="8"><path d="M0 1H2V7H0" fill="none" stroke="#000" strokeWidth="2" /></svg>}
                          {c[7] === '#' && <svg width="6" height="6"><rect width="6" height="6" /><path d="M1 1H2V2H1ZM4 1H5V2H4ZM1 4H2V5H1ZM4 4H5V5H4Z" fill="#fff" /></svg>}
                        </Layer>
                      ))}
                    </LayerGroup>
                  ))}
                </Layers>
                <Grooves />
                <Scroll><Tri d="up" /><Thumb /><Tri d="down" /></Scroll>
              </ListRow>
              <Active />
            </LeftPanel>
            <Canvas><Geometry /></Canvas>
            <RightCol>
              <Coords>{'X = 0.348736"\nY = 4.089588"'}</Coords>
            </RightCol>
          </CamBody>
          <PromptRow>
            <XYLabel htmlFor="xy">X Y :</XYLabel>
            <XYBox>
              <XYInput id="xy" />
              <CaretMark width="8" height="16"><path d="M1 1H3L4 2L5 1H7M4 2V14M1 15H3L4 14L5 15H7" fill="none" stroke="#000" /></CaretMark>
            </XYBox>
            <Bang aria-label="Alert"><svg width="16" height="17"><rect x=".5" y=".5" width="15" height="16" fill="#ffffcb" stroke="#000" /><path d="M8 3V11M8 13V15" stroke="#000" strokeWidth="2" /></svg></Bang>
            <Message>&lt;M1&gt; - Select first area corner</Message>
            <Units><span>Inch<Knob /></span></Units>
          </PromptRow>
          <CamStatus><div><span>szdrl -&gt; dkst : 0.0020002</span><span>szdrl -&gt; dksb : 0.0020002</span></div></CamStatus>
        </CamInner>
        <CamFrame />
      </CamWindow>

      <Popview>
        <PopTitle>
          <Blur width="725" height="26" viewBox="97 232 725 26" fill="none" strokeWidth="4">
            <path d="M350 232L300 258M480 232L464 258M591 232L600 258M650 232L672 258" stroke="#9aa4a8" />
            <path d="M277 232V258" stroke="#a02020" /><path d="M289 232V258" stroke="#8018a0" />
          </Blur>
          <PopIcon><XIcon /></PopIcon>
          <PopName>Popview - 1</PopName>
        </PopTitle>
        <PopView>
          <svg width="713" height="594" viewBox="103 260 713 594" fill="none" shapeRendering="crispEdges">
            <path d="M107 455H215V589H107M740 455H632V589H740" stroke="#c81e1e" />
            <path d="M107 585H740" stroke="#1414c8" />
            <circle cx="192" cy="565" r="34" stroke="#3cc83c" /><circle cx="657" cy="567" r="34" stroke="#3cc83c" />
          </svg>
        </PopView>
        <CloseBtn>Close</CloseBtn>
      </Popview>

      <Fox>
        <FoxTitle><G />Foxmail<button aria-label="Minimize" /></FoxTitle>
        <Toolbar>
          {tools.map(([i, t, w, c]) => <Tool key={i} $w={w} $caret={c}>{toolIcons[i]}{t}</Tool>)}
          <Search>
            <svg width="14" height="15" viewBox="0 0 14 15"><circle cx="6" cy="6" r="5" fill="none" stroke="#7b8894" strokeWidth="2" /><path d="M9 10L13 14" stroke="#7b8894" strokeWidth="2" /></svg>
            <Chip htmlFor="q">全文:包边</Chip>
            <input id="q" />
            <button aria-label="Clear"><svg width="16" height="16"><circle cx="8" cy="8" r="7" fill="#a4a8ab" /><path d="M5 5L11 11M11 5L5 11" stroke="#fff" /></svg></button>
            <MoreBtn aria-label="More"><svg width="12" height="12"><path d="M2 2L6 5L10 2M2 7L6 10L10 7" fill="none" stroke="#66788a" strokeWidth="2" /></svg></MoreBtn>
          </Search>
        </Toolbar>
        <FoxBody>
          <Side>
            <SideTop>
              <Tree>
                {treeData.map(([lv, ic, t, f], k) => (
                  <Node key={k} $level={lv} $dim={!!(f & 2)} $sel={!!(f & 4)}><Twist $on={!!(f & 1)} />{treeIcons[ic]}{t}</Node>
                ))}
              </Tree>
              <SideScroll>
                <SideThumb><svg width="7" height="8"><path d="M0 1H7M0 4H7M0 7H7" stroke="#6f8bab" /></svg></SideThumb>
              </SideScroll>
            </SideTop>
            <SideBar>
              <button aria-label="Mail"><svg width="18" height="14"><rect x="1" y="1" width="16" height="12" fill="#fafcff" stroke="#5f7490" /><path d="M3 8H8M3 10H10M12 3H15V6H12Z" fill="none" stroke="#5f7490" /></svg></button>
              <button aria-label="Contacts"><svg width="18" height="15"><rect x="1" y="1" width="14" height="13" fill="#b06a35" stroke="#6c3c17" /><circle cx="8" cy="5" r="2" fill="#3d1f0a" /><path d="M4 11Q8 5 12 11Z" fill="#3d1f0a" /></svg></button>
              <button aria-label="Calendar"><svg width="18" height="15"><rect x="1" y="1" width="15" height="13" fill="#fff" stroke="#3f7cb8" /><rect x="1" y="1" width="15" height="3" fill="#3f7cb8" /><path d="M7 7L9 6V12M7 12H11" fill="none" stroke="#1f4f80" /></svg></button>
              <button aria-label="Notes"><svg width="18" height="15"><rect x="1" y="1" width="15" height="13" fill="#4d9f5a" stroke="#2f7a3c" /><path d="M5 11L6 8L11 3L13 5L8 10Z" fill="#fff" /></svg></button>
              <button aria-label="RSS"><svg width="18" height="15"><rect x="1" y="1" width="15" height="13" fill="#f0a354" stroke="#b9691c" /><circle cx="5" cy="11" r="1" fill="#fff" /><path d="M4 7A4 4 0 0 1 9 12M4 4A8 8 0 0 1 12 12" fill="none" stroke="#fff" /></svg></button>
            </SideBar>
          </Side>
          <Main>
            <Tabs><Tab $on>当前目录</Tab><Tab>所有邮件</Tab></Tabs>
            <Mails>
              <colgroup>
                {[24, 24, 24, 111, 0, 142, 91, 24, 61].map((w, k) => <col key={k} width={w || undefined} />)}
              </colgroup>
              <thead>
                <tr>
                  <th><Dot c="#b3bec8" /></th>
                  <th><svg width="4" height="13"><path d="M0 0H4L3 8H1ZM1 10H3V13H1Z" fill="#c4161c" /></svg></th>
                  <th><Clip /></th>
                  <th>发件人</th>
                  <th>主题</th>
                  <th><SortHead>日期<Caret /></SortHead></th>
                  <th>大小</th>
                  <th><Star c="#a9b4be" /></th>
                  <th>所在</th>
                </tr>
              </thead>
              <tbody>
                <tr><GroupCell $cut colSpan={9}><div>三周前 (1 封)</div></GroupCell></tr>
                <MailRow m={firstMail} />
                <tr><GroupCell colSpan={9}><div>上个月 (8 封)</div></GroupCell></tr>
                {mails.map((m, k) => <MailRow key={k} m={m} />)}
              </tbody>
            </Mails>
            <Split />
            <Preview>
              <MailHead>
                <div><dt>抄送：</dt><dd><a href="#liny">hy-liny[李海燕]</a>; <a href="#zhoudan">zhoudan[周丹]</a>; <a href="#lrc">lrc[李仁聪]</a></dd></div>
                <div><dt>主题：</dt><dd>转发: 转发: <Hot>包边</Hot>槽设计优化PCN问题</dd></div>
              </MailHead>
              <Para $gap>各位好：</Para>
              <Para $in><Hot>包边</Hot>板<Lat>,</Lat><Hot>包边</Hot>位置和非<Hot>包边</Hot>位置交接的地方，添加的<Lat>roubk</Lat>孔位置加法有更新。<Red><Lat>p2/p3/p6</Lat>现在都必须按此要求添加<Lat>roubk</Lat>孔</Red></Para>
              <Para $in>原要求，添加的<Lat>roubk</Lat>孔和<Lat>pthrou10mil</Lat>的外形线相切，相当于<Lat>roubk</Lat>孔往板内多补了<Lat>5mil</Lat>左右。</Para>
              <Para $in><Red>更新后的要求：</Red>添加的<Lat>roubk</Lat>孔位置为<Lat>pthrou</Lat>和<Lat>rout</Lat>中心相交的第一个交点，往板内多钻<Lat>2-4mil</Lat>。具体如下图所示说明。以及附件</Para>
              <Para $gap>加法说明。</Para>
              <Shot>
                <ShotPanel>
                  <ShotList>
                    {shotGroups.map((g, i) => (
                      <ShotGroup key={i} $n={g.length}>
                        {g.map(([n, c]) => {
                          const name = n.replace('*', '');
                          return <ShotLayer key={n} $c={c} $swatch={swatches[name]}><i /><b /><span>{name}{n !== name && <Hand s={4} />}</span></ShotLayer>;
                        })}
                      </ShotGroup>
                    ))}
                  </ShotList>
                </ShotPanel>
                <ShotDrawing />
              </Shot>
            </Preview>
          </Main>
        </FoxBody>
      </Fox>

      <Taskbar>
        <Orb aria-label="Start">
          <svg width="38" height="38" viewBox="0 0 38 38">
            <defs><radialGradient id="orb" cx="50%" cy="85%" r="80%"><stop offset="0" stopColor="#35e0f8" /><stop offset=".5" stopColor="#2272a8" /><stop offset="1" stopColor="#8fa9b8" /></radialGradient></defs>
            <circle cx="19" cy="19" r="18" fill="url(#orb)" stroke="#27414f" />
            <path d="M11 10Q15 7 18 10L17 18Q13 16 9 18Z" fill="#ee5a28" /><path d="M20 10Q24 13 29 10L27 18Q23 20 19 18Z" fill="#8cc63f" />
            <path d="M9 20Q13 17 17 20L15 27Q11 25 7 27Z" fill="#3c9fe6" /><path d="M19 20Q23 22 27 20L25 28Q21 30 17 28Z" fill="#fdc82f" />
          </svg>
        </Orb>
        <Quick $w={34} aria-label="Internet Explorer"><svg width="18" height="18" viewBox="0 0 18 18"><path d="M14 12A6 6 0 1 1 15 9H6" fill="none" stroke="#3fa9f5" strokeWidth="3" /><path d="M1 16Q-1 13 8 6Q16 0 17 3" fill="none" stroke="#f5c63a" strokeWidth="2" /></svg></Quick>
        <Quick $w={45} aria-label="Explorer"><svg width="17" height="15" viewBox="0 0 17 15"><path d="M1 1H7L9 3H15V14H1Z" fill="#fae29a" stroke="#c9a44a" /><path d="M4 14V8H13V14" fill="#7ec3ea" /></svg></Quick>
        <Group items={[['fox', 'Foxmail']]} />
        <Group items={[['disk', 'Admini...'], ['note', 'Lister - ...']]} />
        <Quick $w={39} aria-label="Calculator"><svg width="12" height="15"><rect width="12" height="15" rx="1" fill="#cfe5f5" /><rect x="2" y="2" width="8" height="3" fill="#3f8ac9" /><path d="M2 8H10M2 11H10" stroke="#6d95b5" strokeWidth="2" strokeDasharray="2 1" /></svg></Quick>
        <Quick $w={41} aria-label="Viewer"><svg width="15" height="15"><rect width="15" height="15" fill="#fff" /><path d="M2 3L7 1L8 11Z" fill="#159c46" /><path d="M7 3L13 9L12 13L7 10Z" fill="#d8232a" /></svg></Quick>
        <Quick $w={39} aria-label="Player"><svg width="16" height="16"><circle cx="8" cy="8" r="8" fill="#f7e11b" /><path d="M8 0A8 8 0 0 1 8 16Q12 8 8 0Z" fill="#18a34a" /><path d="M8 2L9 7Q12 11 7 14" fill="none" stroke="#0c6b2e" strokeWidth="2" /></svg></Quick>
        <Quick $w={42} aria-label="Chat"><svg width="17" height="15"><rect width="17" height="15" rx="2" fill="#18b818" /><path d="M3 4H7V9H3ZM9 4V9M11 9V4H14V9M3 12H14" fill="none" stroke="#fff" /></svg></Quick>
        {taskGroups.map((g, k) => <Group key={k} items={g} />)}
        <Tray>
          <svg width="9" height="5"><path d="M0 5L4 0L9 5Z" fill="#fff" /></svg>
          <TrayKeys><Keys w={18} h={18} /></TrayKeys>
          <svg width="17" height="17"><circle cx="8" cy="8" r="8" fill="#3c96ec" /><path d="M4 4L12 7L10 13L8 9Z" fill="#fff" /></svg>
          <svg width="17" height="16"><path d="M2 1V15M3 2H12V8H3Z" stroke="#fff" fill="#dfe5e8" /><circle cx="11" cy="11" r="5" fill="#d8201c" /><path d="M9 9L13 13M13 9L9 13" stroke="#fff" /></svg>
          <svg width="17" height="15"><path d="M6 4H15V10H6ZM8 13H13M1 1V4H5V1M3 4V13H6" fill="none" stroke="#fff" /></svg>
          <svg width="16" height="14"><path d="M0 5H3L7 1V13L3 9H0Z" fill="#fff" /><path d="M9 4Q11 7 9 10M12 2Q15 7 12 12" fill="none" stroke="#fff" /></svg>
          <Clock>10:04</Clock>
          <ShowDesk aria-label="Show desktop" />
        </Tray>
      </Taskbar>

      <Balloon>
        <Keys w={31} h={30} />
        <BalloonText>
          <h2>Windows 不是正版</h2>
          单击此消息了解如何获得正版。
        </BalloonText>
        <BalloonBtns>
          <button aria-label="Options"><svg width="11" height="11"><path d="M1 1L3 4L5 3L10 9" fill="none" stroke="#9aa0a6" strokeWidth="3" /></svg></button>
          <button aria-label="Close"><svg width="9" height="9"><path d="M1 1L8 8M8 1L1 8" stroke="#8b9096" strokeWidth="2" /></svg></button>
        </BalloonBtns>
        <Tail width="22" height="20"><path d="M1 0L17 18V0" fill="#e4e9f0" stroke="#565a5e" /></Tail>
      </Balloon>
    </Desktop>
  );
}
